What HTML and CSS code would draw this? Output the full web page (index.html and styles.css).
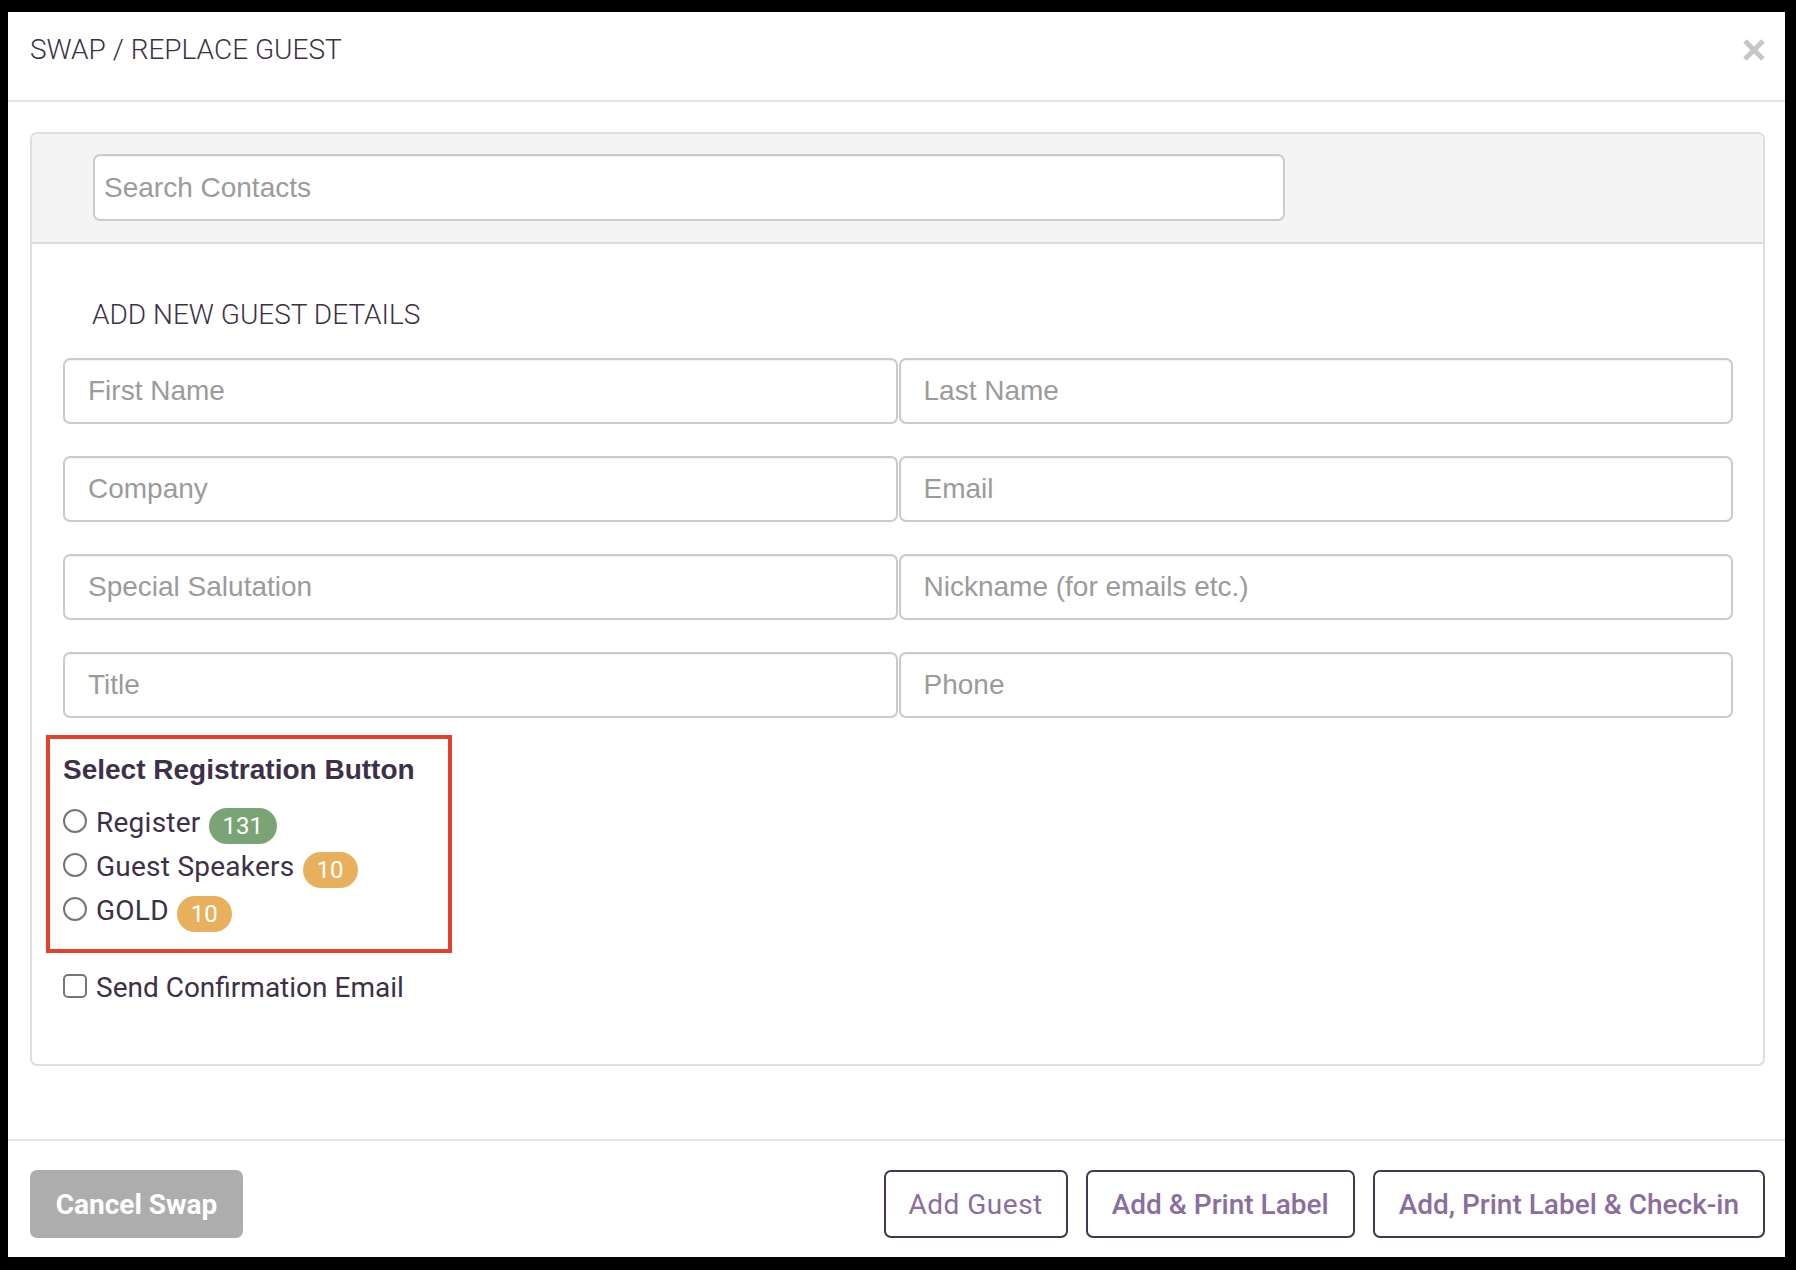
FILE: index.html
```html
<!DOCTYPE html>
<html lang="en">
<head>
<meta charset="utf-8">
<title>Swap / Replace Guest</title>
<link rel="stylesheet" href="styles.css">
</head>
<body>
<div class="modal">
  <header class="modal-header">
    <h4 class="modal-title">SWAP / REPLACE GUEST</h4>
    <button class="close" type="button" aria-label="Close">
      <svg width="22" height="22" viewBox="0 0 22 22"><path d="M2 2 L20 20 M20 2 L2 20" stroke="currentColor" stroke-width="5"/></svg>
    </button>
  </header>

  <div class="modal-body">
    <div class="panel">
      <div class="panel-heading">
        <input class="search-input" type="text" placeholder="Search Contacts">
      </div>
      <div class="panel-body">
        <h5 class="section-title">ADD NEW GUEST DETAILS</h5>
        <div class="field-grid">
          <input class="field" type="text" placeholder="First Name">
          <input class="field" type="text" placeholder="Last Name">
          <input class="field" type="text" placeholder="Company">
          <input class="field" type="text" placeholder="Email">
          <input class="field" type="text" placeholder="Special Salutation">
          <input class="field" type="text" placeholder="Nickname (for emails etc.)">
          <input class="field" type="text" placeholder="Title">
          <input class="field" type="text" placeholder="Phone">
        </div>

        <div class="reg-box">
          <div class="reg-heading">Select Registration Button</div>
          <label class="option">
            <input class="radio" type="radio" name="reg">
            <span class="option-text">Register</span>
            <span class="badge badge-green">131</span>
          </label>
          <label class="option">
            <input class="radio" type="radio" name="reg">
            <span class="option-text">Guest Speakers</span>
            <span class="badge badge-orange">10</span>
          </label>
          <label class="option">
            <input class="radio" type="radio" name="reg">
            <span class="option-text">GOLD</span>
            <span class="badge badge-orange">10</span>
          </label>
        </div>

        <label class="option check-row">
          <input class="checkbox" type="checkbox">
          <span class="option-text">Send Confirmation Email</span>
        </label>
      </div>
    </div>
  </div>

  <footer class="modal-footer">
    <button class="btn btn-cancel" type="button">Cancel Swap</button>
    <div class="actions">
      <button class="btn btn-outline btn-light" type="button">Add Guest</button>
      <button class="btn btn-outline" type="button">Add &amp; Print Label</button>
      <button class="btn btn-outline" type="button">Add, Print Label &amp; Check-in</button>
    </div>
  </footer>
</div>
</body>
</html>
```

FILE: styles.css
```css
* {
  box-sizing: border-box;
}

html,
body {
  margin: 0;
  height: 100%;
}

body {
  background: #000;
  font-family: Roboto, "Liberation Sans", Arial, sans-serif;
  color: #3d3048;
  padding: 12px 11px 13px 8px;
}

.modal {
  background: #fff;
  height: 1245px;
  display: flex;
  flex-direction: column;
}

/* header */
.modal-header {
  flex: none;
  height: 90px;
  border-bottom: 2px solid #e5e5e5;
  display: flex;
  justify-content: space-between;
  align-items: flex-start;
  padding: 20px 20px 0 22px;
}

.modal-title {
  margin: 0;
  font-size: 28px;
  line-height: 36px;
  font-weight: 300;
  color: #3d3048;
}

.close {
  border: 0;
  background: none;
  padding: 0;
  margin-top: 7px;
  color: #c6c6c6;
  line-height: 0;
  cursor: pointer;
}

/* body */
.modal-body {
  flex: none;
  padding: 30px 20px 73px 22px;
}

.panel {
  border: 2px solid #dedede;
  border-radius: 7px;
  overflow: hidden;
}

.panel-heading {
  background: #f4f4f4;
  border-bottom: 2px solid #dcdcdc;
  padding: 20px 0 21px 61px;
}

.search-input {
  display: block;
  width: 1192px;
  height: 67px;
  border: 2px solid #cbcbcb;
  border-radius: 7px;
  background: #fff;
  padding: 0 9px;
  font-family: "Liberation Sans", Arial, sans-serif;
  font-size: 28px;
  color: #555;
  box-shadow: inset 0 1px 1px rgba(0, 0, 0, 0.06);
}

input::placeholder {
  color: #9b9b9b;
}

.panel-body {
  padding: 55px 30px 54px 31px;
}

.section-title {
  margin: 0 0 27px 29px;
  font-size: 28px;
  line-height: 32px;
  font-weight: 300;
  color: #3d3048;
}

.field-grid {
  display: grid;
  grid-template-columns: 1fr 1fr;
  column-gap: 1px;
  row-gap: 32px;
}

.field {
  display: block;
  width: 100%;
  height: 66px;
  border: 2px solid #cbcbcb;
  border-radius: 7px;
  background: #fff;
  padding: 0 23px;
  font-family: "Liberation Sans", Arial, sans-serif;
  font-size: 28px;
  color: #555;
  box-shadow: inset 0 1px 1px rgba(0, 0, 0, 0.06);
}

/* registration choice */
.reg-box {
  margin: 17px 0 0 -17px;
  width: 406px;
  border: 4px solid #e6402b;
  padding: 15px 13px 16px 13px;
}

.reg-heading {
  font-family: "Liberation Sans", Arial, sans-serif;
  font-size: 28px;
  line-height: 32px;
  font-weight: 700;
  color: #3d3048;
  margin-bottom: 15px;
}

.option {
  display: flex;
  align-items: center;
  height: 44px;
  font-size: 28px;
  color: #3d3048;
  cursor: pointer;
}

.radio,
.checkbox {
  appearance: none;
  -webkit-appearance: none;
  width: 24px;
  height: 24px;
  margin: 0 9px 5px 0;
  border: 2px solid #757575;
  background: #fff;
  flex: none;
}

.radio {
  border-radius: 50%;
}

.checkbox {
  border-radius: 5px;
}

.option-text {
  line-height: 44px;
  letter-spacing: 0.25px;
}

.check-row .option-text {
  letter-spacing: 0;
}

.badge {
  margin: 6px 0 0 8px;
  height: 36px;
  padding: 0 14px;
  border-radius: 18px;
  color: #fff;
  font-size: 24px;
  line-height: 36px;
  font-weight: 400;
}

.badge-green {
  background: #7aa476;
}

.badge-orange {
  background: #e8b05c;
}

.check-row {
  margin-top: 13px;
}

/* footer */
.modal-footer {
  flex: none;
  margin-top: auto;
  border-top: 2px solid #e5e5e5;
  padding: 29px 20px 19px 22px;
  display: flex;
  justify-content: space-between;
  align-items: center;
}

.actions {
  display: flex;
  gap: 18px;
}

.btn {
  height: 68px;
  border-radius: 7px;
  font-family: Roboto, "Liberation Sans", Arial, sans-serif;
  font-size: 28px;
  cursor: pointer;
}

.btn-cancel {
  background: #adadad;
  border: 0;
  color: #fff;
  font-weight: 700;
  padding: 0 23px;
  width: 213px;
}

.btn-outline {
  background: #fff;
  border: 2px solid #45364f;
  color: #8b6d9e;
  font-weight: 500;
  padding: 0 24px;
}

.btn-light {
  font-weight: 400;
  letter-spacing: 0.5px;
  padding: 0 23px;
}
```
